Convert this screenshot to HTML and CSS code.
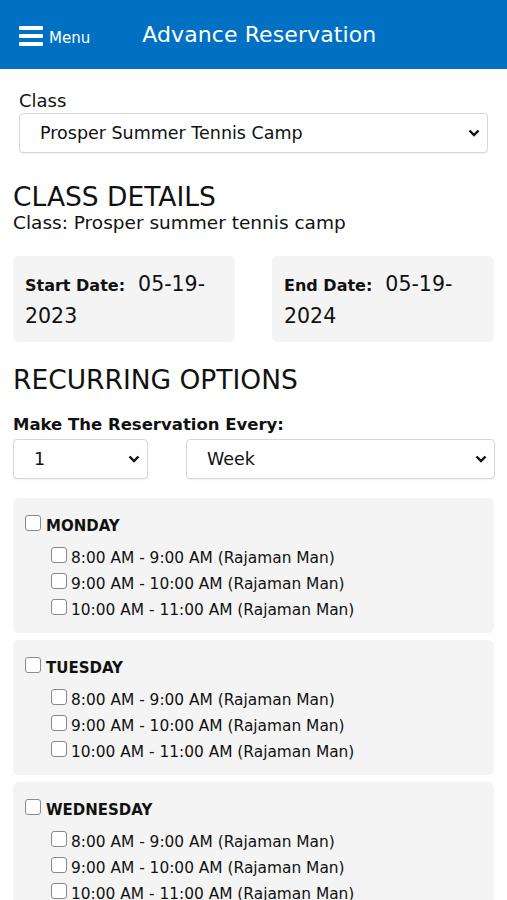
FILE: index.html
```html
<!DOCTYPE html>
<html lang="en">
<head>
    <meta charset="UTF-8">
    <meta name="viewport" content="width=device-width, initial-scale=1.0">
    <title>Advance Reservation</title>
    <link rel="stylesheet" href="styles.css">
</head>
<body>
    <header class="topbar">
        <button class="menu-btn">
            <svg width="24" height="20" viewBox="0 0 24 20"><rect x="0" y="0" width="24" height="4" rx="1" fill="#fff"/><rect x="0" y="8" width="24" height="4" rx="1" fill="#fff"/><rect x="0" y="16" width="24" height="4" rx="1" fill="#fff"/></svg>
            <span>Menu</span>
        </button>
        <h1 class="title">Advance Reservation</h1>
    </header>

    <main class="content">
        <div class="field class-field">
            <label class="label">Class</label>
            <div class="select-wrap">
                <select class="select"><option>Prosper Summer Tennis Camp</option></select>
                <svg class="chevron" width="12" height="8" viewBox="0 0 12 8"><path d="M1.5 1.5 L6 6 L10.5 1.5" fill="none" stroke="#111" stroke-width="2.4"/></svg>
            </div>
        </div>

        <h2 class="section-title">CLASS DETAILS</h2>
        <p class="subtext">Class: Prosper summer tennis camp</p>

        <div class="dates">
            <div class="date-box"><b>Start Date:</b>&nbsp; 05-19-2023</div>
            <div class="date-box"><b>End Date:</b>&nbsp; 05-19-2024</div>
        </div>

        <h2 class="section-title recurring">RECURRING OPTIONS</h2>
        <label class="label every">Make The Reservation Every:</label>
        <div class="every-row">
            <div class="select-wrap small">
                <select class="select"><option>1</option></select>
                <svg class="chevron" width="12" height="8" viewBox="0 0 12 8"><path d="M1.5 1.5 L6 6 L10.5 1.5" fill="none" stroke="#111" stroke-width="2.4"/></svg>
            </div>
            <div class="select-wrap wide">
                <select class="select"><option>Week</option></select>
                <svg class="chevron" width="12" height="8" viewBox="0 0 12 8"><path d="M1.5 1.5 L6 6 L10.5 1.5" fill="none" stroke="#111" stroke-width="2.4"/></svg>
            </div>
        </div>

        <div class="days">
            <div class="day-card">
                <label class="day-name"><input type="checkbox" class="check">MONDAY</label>
                <label class="slot"><input type="checkbox" class="check">8:00 AM - 9:00 AM (Rajaman Man)</label>
                <label class="slot"><input type="checkbox" class="check">9:00 AM - 10:00 AM (Rajaman Man)</label>
                <label class="slot"><input type="checkbox" class="check">10:00 AM - 11:00 AM (Rajaman Man)</label>
            </div>
            <div class="day-card">
                <label class="day-name"><input type="checkbox" class="check">TUESDAY</label>
                <label class="slot"><input type="checkbox" class="check">8:00 AM - 9:00 AM (Rajaman Man)</label>
                <label class="slot"><input type="checkbox" class="check">9:00 AM - 10:00 AM (Rajaman Man)</label>
                <label class="slot"><input type="checkbox" class="check">10:00 AM - 11:00 AM (Rajaman Man)</label>
            </div>
            <div class="day-card">
                <label class="day-name"><input type="checkbox" class="check">WEDNESDAY</label>
                <label class="slot"><input type="checkbox" class="check">8:00 AM - 9:00 AM (Rajaman Man)</label>
                <label class="slot"><input type="checkbox" class="check">9:00 AM - 10:00 AM (Rajaman Man)</label>
                <label class="slot"><input type="checkbox" class="check">10:00 AM - 11:00 AM (Rajaman Man)</label>
            </div>
        </div>
    </main>
</body>
</html>
```

FILE: styles.css
```css
* {
    margin: 0;
    padding: 0;
    box-sizing: border-box;
    font-family: "DejaVu Sans", sans-serif;
}

body {
    background: #fff;
    color: #111;
}

.topbar {
    height: 69px;
    background: #0071c2;
    display: flex;
    align-items: center;
    padding: 0 19px;
    color: #fff;
}

.menu-btn {
    display: flex;
    align-items: center;
    gap: 6px;
    background: none;
    border: none;
    color: #fff;
    font-size: 15px;
    padding-top: 2px;
}

.menu-btn span {
    padding-top: 4px;
}

.title {
    font-size: 22px;
    font-weight: 500;
    margin-left: 52px;
    letter-spacing: 0.1px;
}

.content {
    padding: 21px 13px 0;
}

.label {
    display: block;
    font-size: 18px;
    font-weight: 500;
}

.class-field {
    padding: 0 6px 0 6px;
}

.class-field .label {
    margin-bottom: 2px;
}

.select-wrap {
    position: relative;
    height: 40px;
}

.select {
    appearance: none;
    width: 100%;
    height: 100%;
    border: 1px solid #d6d6d6;
    border-radius: 4px;
    background: #fff;
    font-size: 17.5px;
    color: #111;
    padding: 0 20px;
    box-shadow: 0 1px 2px rgba(0,0,0,0.06);
}

.chevron {
    position: absolute;
    right: 8px;
    top: 16px;
}

.section-title {
    font-size: 26.5px;
    font-weight: 500;
    margin-top: 29px;
    line-height: 30px;
}

.subtext {
    font-size: 18.5px;
    line-height: 22px;
}

.dates {
    display: flex;
    justify-content: space-between;
    margin-top: 22px;
}

.date-box {
    width: 222px;
    height: 86px;
    background: #f4f4f4;
    border-radius: 6px;
    padding: 13px 12px;
    font-size: 20.5px;
    line-height: 31px;
}

.date-box b {
    font-size: 16px;
    font-weight: 600;
}

.recurring {
    margin-top: 23px;
}

.every {
    margin-top: 19px;
    font-size: 16.5px;
    font-weight: 700;
    line-height: 22px;
}

.every-row {
    display: flex;
    gap: 38px;
    margin-top: 3px;
}

.every-row .small {
    width: 135px;
}

.every-row .wide {
    flex: 1;
    margin-right: -1px;
}

.days {
    display: flex;
    flex-direction: column;
    gap: 7px;
    margin-top: 19px;
}

.day-card {
    background: #f4f4f4;
    border-radius: 6px;
    padding: 19px 12px 14px;
    height: 135px;
}

.day-name {
    display: flex;
    align-items: center;
    gap: 5px;
    font-size: 15px;
    font-weight: 600;
    margin-bottom: 10px;
}

.slot {
    display: flex;
    align-items: center;
    gap: 4px;
    font-size: 15.4px;
    line-height: 26px;
    margin-left: 26px;
}

.check {
    appearance: none;
    width: 16px;
    height: 16px;
    border: 1.5px solid #8a8a8a;
    border-radius: 3px;
    background: #fff;
    flex-shrink: 0;
    margin-top: -6px;
}
```
